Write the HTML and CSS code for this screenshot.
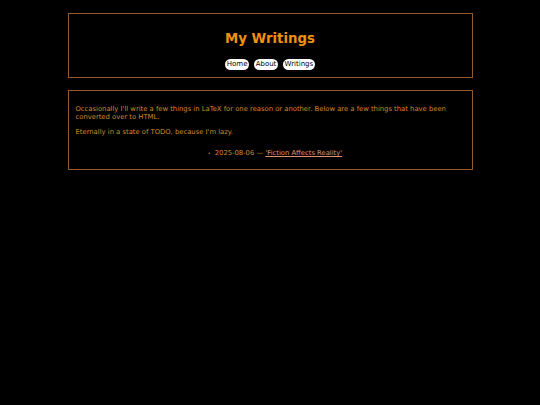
FILE: index.html
```html
<!DOCTYPE html>
<html>
<head>
<meta charset="utf-8">
<link rel="stylesheet" href="styles.css">
</head>
<body>
<header class="box head">
  <h1 class="title">My Writings</h1>
  <nav class="nav">
    <a class="pill" href="#">Home</a>
    <a class="pill" href="#">About</a>
    <a class="pill" href="#">Writings</a>
  </nav>
</header>
<main class="box content">
  <p class="para">Occasionally I'll write a few things in LaTeX for one reason or another. Below are a few things that have been converted over to HTML.</p>
  <p class="para">Eternally in a state of TODO, because I'm lazy.</p>
  <ul class="list">
    <li class="item">2025-08-06 — <a class="link" href="#">'Fiction Affects Reality'</a></li>
  </ul>
</main>
</body>
</html>
```
FILE: styles.css
```css
html, body {
  margin: 0;
  padding: 0;
  background: #000;
}
body {
  font-family: "DejaVu Sans", Verdana, sans-serif;
  color: #d4882a;
  padding-top: 13px;
  display: flex;
  flex-direction: column;
  align-items: center;
  gap: 12px;
}
.box {
  width: 405px;
  box-sizing: border-box;
  border: 1px solid #925c30;
}
.head {
  padding: 16px 8px 7px;
  display: flex;
  flex-direction: column;
  align-items: center;
  gap: 9px;
}
.title {
  margin: 0;
  font-size: 13.3px;
  line-height: 18px;
  font-weight: bold;
  color: #f0900f;
}
.nav {
  display: flex;
  gap: 5px;
  padding-top: 2px;
}
.pill {
  background: #fff;
  color: #000;
  text-decoration: none;
  font-size: 7px;
  line-height: 11px;
  height: 11px;
  padding: 0 1.6px;
  border-radius: 6px;
}
.content {
  padding: 14px 7px 12px;
  font-size: 6.8px;
}
.para {
  margin: 0 0 7px;
  line-height: 8px;
}
.list {
  margin: 13px 0 0;
  padding: 0 0 0 10px;
  list-style: none;
  text-align: center;
  line-height: 8px;
}
.item::before {
  content: "•";
  margin-right: 4px;
  font-size: 5px;
}
.link {
  color: #e0906a;
  text-decoration: underline;
}
```
